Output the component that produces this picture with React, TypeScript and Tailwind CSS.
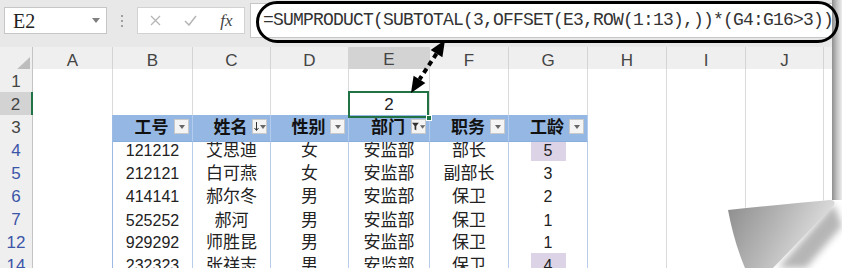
import React from 'react';

const GRID =
  'grid grid-cols-[33px_80px_80px_78px_78px_81px_79px_79px_79px_79px_78px_18px]';
const FONT = "font-['Liberation_Sans','Noto_Sans_CJK_SC',sans-serif]";

const letters = ['A', 'B', 'C', 'D', 'E', 'F', 'G', 'H', 'I', 'J', ''];

const heads: { t: string; icon: 'dd' | 'sort' | 'filter' }[] = [
  { t: '工号', icon: 'dd' },
  { t: '姓名', icon: 'sort' },
  { t: '性别', icon: 'dd' },
  { t: '部门', icon: 'filter' },
  { t: '职务', icon: 'dd' },
  { t: '工龄', icon: 'dd' },
];

const rows = [
  { n: '4', d: ['121212', '艾思迪', '女', '安监部', '部长', '5'], hl: true },
  { n: '5', d: ['212121', '白可燕', '女', '安监部', '副部长', '3'] },
  { n: '6', d: ['414141', '郝尔冬', '男', '安监部', '保卫', '2'] },
  { n: '7', d: ['525252', '郝河', '男', '安监部', '保卫', '1'], gap: true },
  { n: '12', d: ['929292', '师胜昆', '男', '安监部', '保卫', '1'] },
  { n: '14', d: ['232323', '张祥志', '男', '安监部', '保卫', '4'], hl: true },
];

function FilterBtn({ icon }: { icon: 'dd' | 'sort' | 'filter' }) {
  return (
    <div className="absolute right-[3px] top-[4px] w-[15px] h-[15px] bg-[#f4f4f4] border border-[#c9c9c9] flex items-center justify-center gap-[1px]">
      {icon === 'sort' && (
        <svg width="5" height="9" viewBox="0 0 5 9">
          <path d="M2.5 0v8M0.5 6l2 2.5 2-2.5" stroke="#333" strokeWidth="1" fill="none" />
        </svg>
      )}
      {icon === 'filter' && (
        <svg width="8" height="9" viewBox="0 0 8 9">
          <path d="M0 0h8L5 4v5L3 8V4z" fill="#333" />
        </svg>
      )}
      <svg width="6" height="4" viewBox="0 0 6 4">
        <path d="M0 0h6L3 4z" fill="#666" />
      </svg>
    </div>
  );
}

function FormulaBar() {
  return (
    <div className="h-[47px] bg-[#e8e8e8] flex items-start pl-[4px] pt-[7px]">
      <div className="w-[103px] h-[27px] bg-white border border-[#c6c6c6] flex items-center justify-between pl-[8px] pr-[6px]">
        <span className="font-['Liberation_Serif',serif] text-[20px] leading-none text-[#222]">E2</span>
        <svg width="8" height="5" viewBox="0 0 8 5">
          <path d="M0 0h8L4 5z" fill="#808080" />
        </svg>
      </div>
      <div className="w-[30px] h-[27px] flex flex-col items-center justify-center gap-[3px]">
        <span className="w-[2px] h-[2px] bg-[#a0a0a0]" />
        <span className="w-[2px] h-[2px] bg-[#a0a0a0]" />
        <span className="w-[2px] h-[2px] bg-[#a0a0a0]" />
      </div>
      <div className="w-[108px] h-[27px] bg-white border border-[#d2d2d2] flex items-center">
        <div className="w-[36px] flex justify-center">
          <svg width="11" height="11" viewBox="0 0 11 11">
            <path d="M1 1l9 9M10 1l-9 9" stroke="#b5b5b5" strokeWidth="1.3" />
          </svg>
        </div>
        <div className="w-[36px] flex justify-center">
          <svg width="13" height="11" viewBox="0 0 13 11">
            <path d="M1 6l4 4 7-9" stroke="#b5b5b5" strokeWidth="1.5" fill="none" />
          </svg>
        </div>
        <div className="w-[36px] flex justify-center">
          <span className="font-['Liberation_Serif',serif] italic text-[17px] leading-none text-[#444]">fx</span>
        </div>
      </div>
      <div className="ml-[5px] flex-1 h-[35px] -mt-[4px] bg-white border border-[#c6c6c6] flex items-center pl-[12px]">
        <span className="font-['Liberation_Mono',monospace] text-[18px] tracking-[-0.8px] text-[#333] whitespace-nowrap">
          =SUMPRODUCT(SUBTOTAL(3,OFFSET(E3,ROW(1:13),))*(G4:G16&gt;3))
        </span>
      </div>
    </div>
  );
}

function RowHead({ n, blue, sel, gap }: { n: string; blue?: boolean; sel?: boolean; gap?: boolean }) {
  return (
    <div
      className={`flex items-center justify-center text-[17px] border-b ${
        gap ? 'border-b-[3px] border-double border-b-[#a8a8a8]' : 'border-b-[#d4d4d4]'
      } ${sel ? 'bg-[#d3d3d3] border-r-2 border-r-[#217346]' : 'bg-[#efefef] border-r border-r-[#c4c4c4]'} ${
        blue ? 'text-[#3b55a8]' : 'text-[#444]'
      }`}
    >
      {n}
    </div>
  );
}

function Empty({ blueRight }: { blueRight?: boolean }) {
  return (
    <div
      className={`bg-white border-b border-b-[#dadada] border-r ${
        blueRight ? 'border-r-[#9dbbe2]' : 'border-r-[#dadada]'
      }`}
    />
  );
}

export default function App() {
  return (
    <div className={`relative w-[842px] h-[268px] overflow-hidden bg-white ${FONT}`}>
      <FormulaBar />

      {/* column letters */}
      <div className={`${GRID} h-[22px]`}>
        <div className="bg-[#efefef] border-r border-b border-[#c4c4c4] flex items-end justify-end pr-[2px] pb-[2px]">
          <svg width="16" height="15" viewBox="0 0 16 15">
            <path d="M16 0V15H0z" fill="#bdbdbd" />
          </svg>
        </div>
        {letters.map((l, i) => (
          <div
            key={i}
            className={`flex items-center justify-center text-[17px] text-[#444] border-r border-r-[#d4d4d4] ${
              l === 'E' ? 'bg-[#d3d3d3] border-b-2 border-b-[#217346]' : 'bg-[#efefef] border-b border-b-[#b8b8b8]'
            }`}
          >
            {l}
          </div>
        ))}
      </div>

      {/* row 1 */}
      <div className={`${GRID} h-[23px]`}>
        <RowHead n="1" />
        {letters.map((_, i) => (
          <Empty key={i} />
        ))}
      </div>

      {/* row 2 */}
      <div className={`${GRID} h-[23px]`}>
        <RowHead n="2" sel />
        {letters.map((l, i) =>
          l === 'E' ? (
            <div key={i} className="relative bg-white border-r border-b border-[#dadada] flex items-center justify-center text-[17px] text-[#222]">
              2
              <div className="absolute -left-px -top-px right-0 bottom-0 border-2 border-[#217346] z-10" />
              <div className="absolute right-[-3px] bottom-[-3px] w-[6px] h-[6px] bg-[#217346] border border-white z-10" />
            </div>
          ) : (
            <Empty key={i} />
          )
        )}
      </div>

      {/* row 3: table header */}
      <div className={`${GRID} h-[23px]`}>
        <RowHead n="3" />
        <Empty blueRight />
        {heads.map((h, i) => (
          <div
            key={i}
            className="relative bg-[#95b7e3] border-r border-r-[#b3cbec] border-b border-b-[#8aaedc] flex items-center justify-center text-[17px] font-bold text-[#111]"
          >
            <span className="mr-[2px]">{h.t}</span>
            <FilterBtn icon={h.icon} />
          </div>
        ))}
        <Empty />
        <Empty />
        <Empty />
        <Empty />
      </div>

      {rows.map((r) => (
        <div key={r.n} className={`${GRID} h-[23px]`}>
          <RowHead n={r.n} blue gap={r.gap} />
          <Empty blueRight />
          {r.d.map((v, i) => {
            const num = /^\d+$/.test(v);
            const last = i === r.d.length - 1;
            return (
              <div
                key={i}
                className={`bg-white border-r border-r-[#b7cdea] border-b border-b-[#95b5df] flex items-center justify-center text-[#222] ${
                  num ? 'text-[16px]' : 'text-[17px]'
                }`}
              >
                {last && r.hl ? (
                  <div className="w-[35px] h-full bg-[#dcd3e6] flex items-center justify-center">{v}</div>
                ) : (
                  v
                )}
              </div>
            );
          })}
          <Empty />
          <Empty />
          <Empty />
          <Empty />
        </div>
      ))}

      {/* annotations: oval, arrow, page curl */}
      <svg className="absolute left-0 top-0 pointer-events-none z-20" width="842" height="268" viewBox="0 0 842 268">
        <defs>
          <linearGradient id="edge" x1="0" y1="0" x2="1" y2="0">
            <stop offset="0" stopColor="#8e8e8e" />
            <stop offset="0.5" stopColor="#c4c4c4" />
            <stop offset="1" stopColor="#ececec" />
          </linearGradient>
          <linearGradient id="curl" x1="0" y1="0" x2="1" y2="0.35">
            <stop offset="0" stopColor="#8c8c8c" />
            <stop offset="0.55" stopColor="#b9b9b9" />
            <stop offset="1" stopColor="#e2e2e2" />
          </linearGradient>
          <filter id="soft" x="-50%" y="-50%" width="200%" height="200%">
            <feGaussianBlur stdDeviation="3.5" />
          </filter>
        </defs>

        <rect x="832" y="0" width="10" height="204" fill="url(#edge)" />
        <path d="M728 210 Q780 202 833 200 L842 200 L842 268 L745 268 Q735 240 728 210 Z" fill="#ffffff" />
        <path d="M834 204 L778 268 L806 268 L842 226 Z" fill="#7a7a7a" opacity="0.55" filter="url(#soft)" />
        <path
          d="M728 210 Q785 204 830 200 Q836 200 834 205 L773 268 L745 268 Q734 242 728 210 Z"
          fill="url(#curl)"
        />

        <rect x="257.5" y="2.5" width="580" height="39" rx="19.5" fill="none" stroke="#000" strokeWidth="3" />

        <path d="M445 40 L442.4 57.3 L430.6 49.9 Z" fill="#000" />
        <path d="M411 93 L413.6 75.7 L425.4 83.1 Z" fill="#000" />
        <path d="M436.5 53.6 L419.5 79.4" stroke="#000" strokeWidth="4" strokeDasharray="5 4" />
      </svg>
    </div>
  );
}
